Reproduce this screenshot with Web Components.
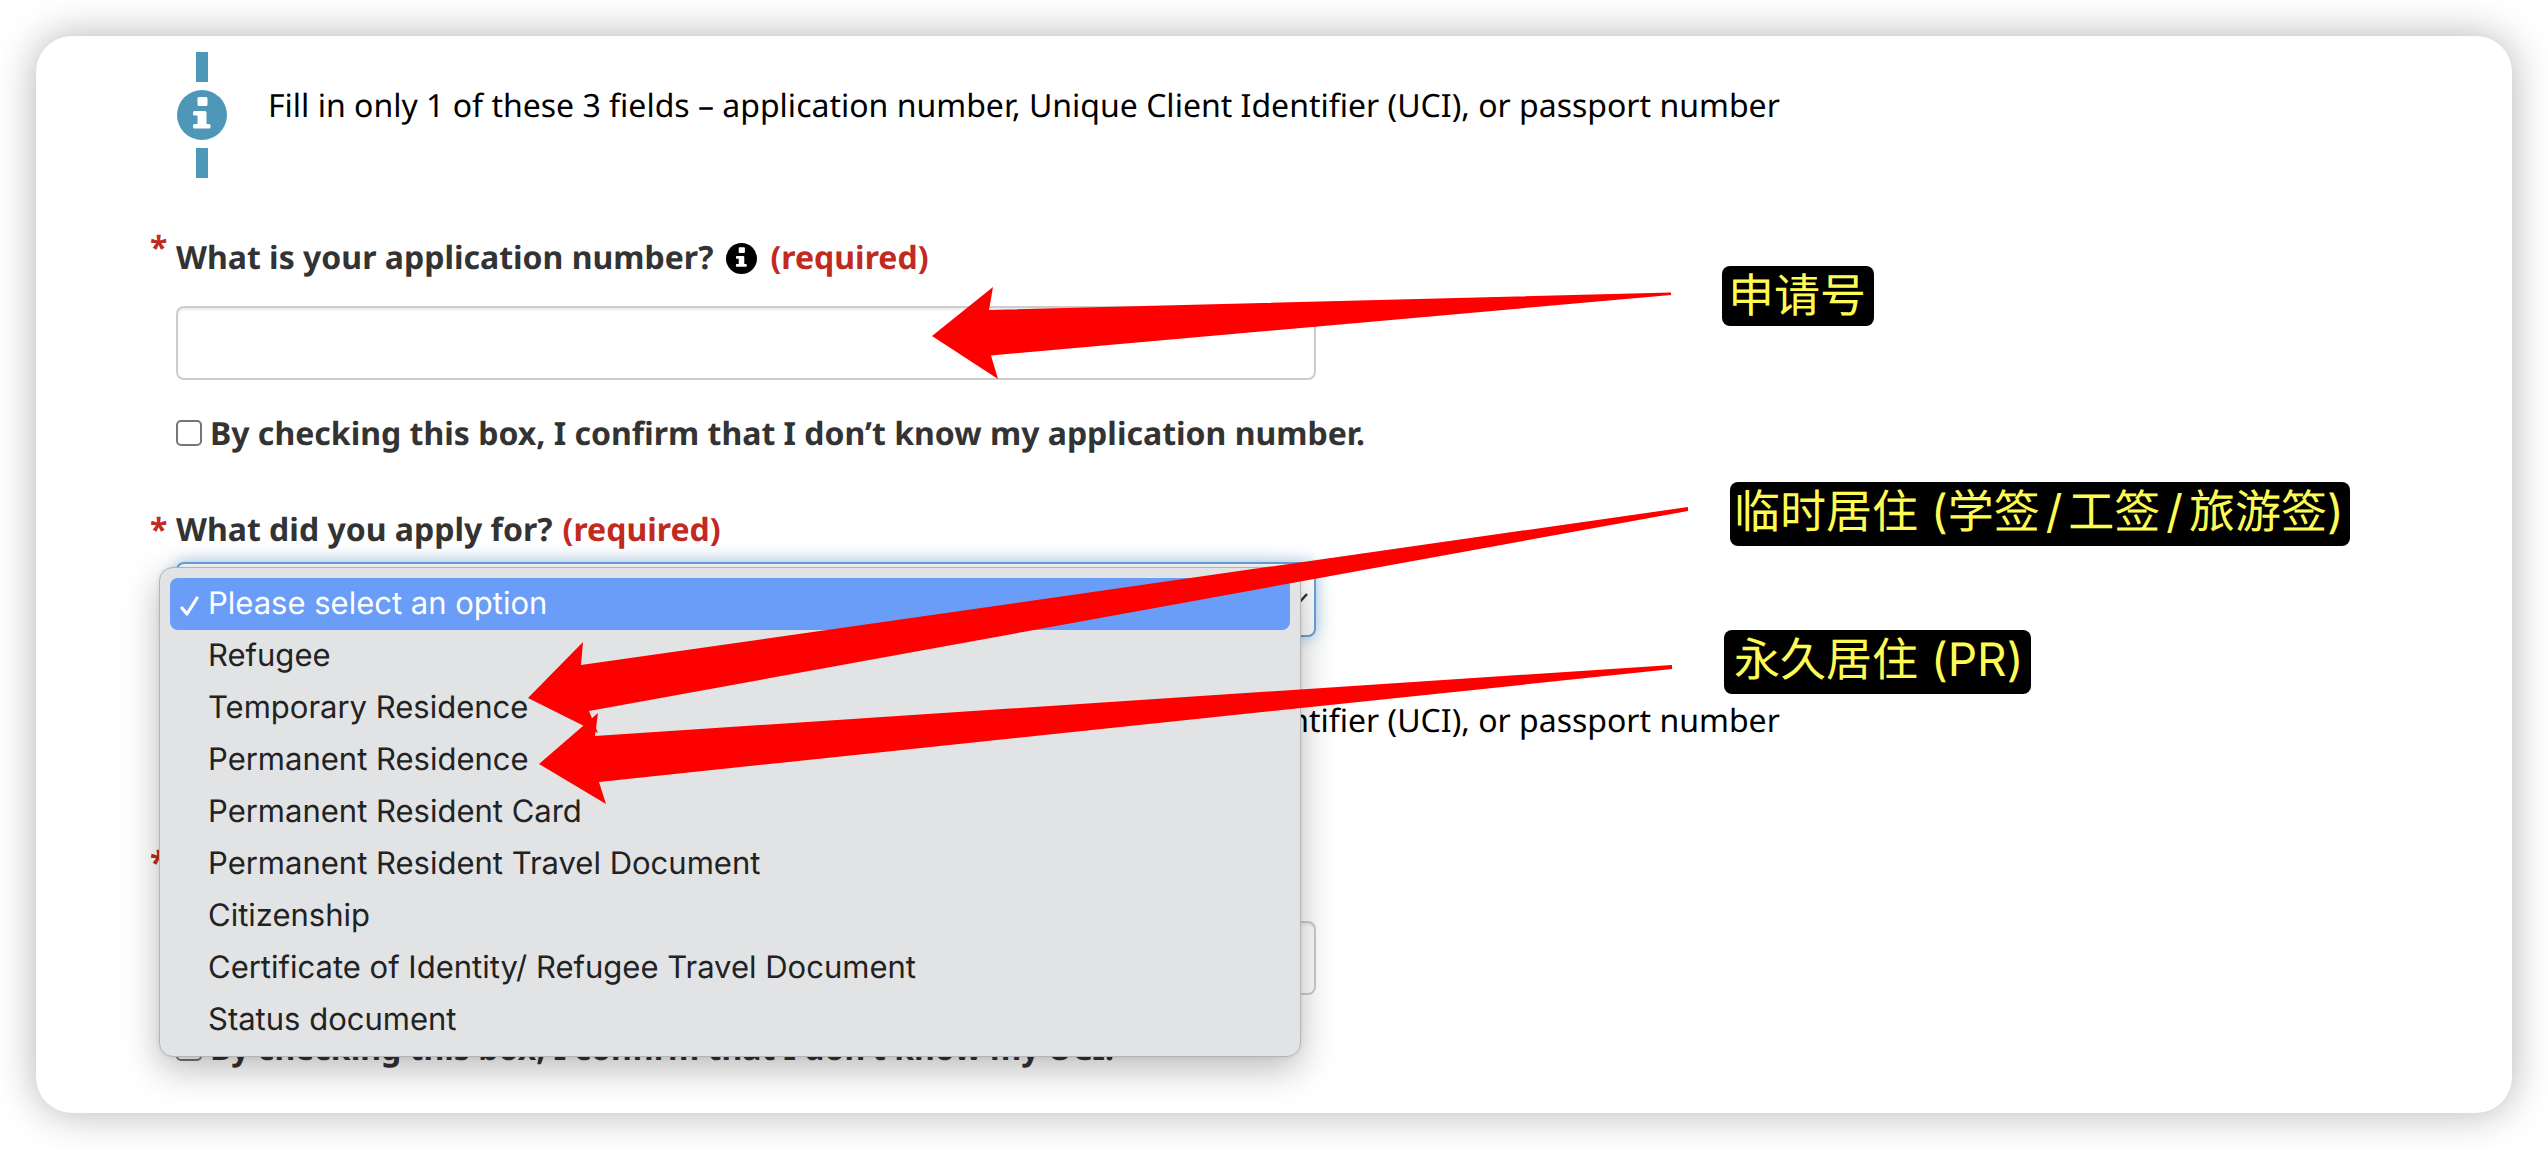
<!DOCTYPE html>
<html lang="en">
<head>
<meta charset="utf-8">
<title>Application status</title>
<style>
  body { margin: 0; background: #fff; font-family: "Noto Sans", sans-serif; font-size: 32px; line-height: 48px; color: #333; text-rendering: geometricPrecision; }
</style>
</head>
<body>
<status-page></status-page>
<script>
const define = (name, html, setup) => customElements.define(name, class extends HTMLElement {
  constructor() {
    super();
    const t = document.createElement('template');
    t.innerHTML = html;
    this.attachShadow({ mode: 'open' }).append(t.content.cloneNode(true));
  }
  connectedCallback() { if (setup) setup(this, this.shadowRoot); }
});

define('info-icon', `
  <style>:host{display:block;flex:none} svg{display:block;width:100%;height:100%}</style>
  <svg viewBox="0 0 50 50" aria-hidden="true">
    <circle cx="25" cy="25" r="25" fill="currentColor"/>
    <path fill="#fff" d="M22 7h7a1.500 1.500 0 0 1 1.500 1.500v6a1.500 1.500 0 0 1-1.500 1.500h-7a1.500 1.500 0 0 1-1.500-1.500v-6A1.500 1.500 0 0 1 22 7zM17.500 21H28a1.500 1.500 0 0 1 1.500 1.500V34h2.500a1.500 1.500 0 0 1 1.500 1.500v1.500a1.500 1.500 0 0 1-1.500 1.500H17.500a1.500 1.500 0 0 1-1.500-1.500v-1.500a1.500 1.500 0 0 1 1.500-1.500H20.500v-8.500h-3a1.500 1.500 0 0 1-1.500-1.500v-1.500A1.500 1.500 0 0 1 17.500 21z"/>
  </svg>`);

define('info-note', `
  <style>
    :host{display:flex;gap:41px;color:#000}
    .rail{display:flex;flex-direction:column;align-items:center;gap:8px;width:50px;height:126px;margin-left:1px;color:#4e97b8}
    .bar{width:12px;flex:1;background:currentColor}
    info-icon{width:50px;height:50px}
    p{margin:0;padding-top:30px}
  </style>
  <div class="rail"><span class="bar"></span><info-icon></info-icon><span class="bar"></span></div>
  <p><slot></slot></p>`);

define('field-label', `
  <style>
    :host{display:flex;gap:8px;margin-left:-26px;font-weight:700}
    .star,.req{color:#c12a1f}
    .star{width:18px}
    :host([hint]) .star{line-height:28px}
    .text{display:flex;align-items:center;gap:10px}
    info-icon{display:none;width:31px;height:31px;margin:0 3px;color:#000}
    :host([hint]) info-icon{display:block}
    :host([bare]) .text{visibility:hidden;height:48px}
  </style>
  <span class="star">*</span>
  <span class="text"><slot></slot><info-icon></info-icon><span class="req">(required)</span></span>`, (host, root) => {
    if (host.hasAttribute('bare')) root.querySelector('.req').remove();
  });

define('text-field', `
  <style>
    :host{display:block}
    label{display:block;margin-bottom:24px}
    input{display:block;box-sizing:border-box;width:100%;max-width:1140px;height:74px;padding:0 24px;border:2px solid #ccc;border-radius:8px;background:#fff;font:inherit;box-shadow:inset 0 2px 2px rgba(0,0,0,.075);outline:0}
  </style>
  <label for="f"><field-label hint><slot></slot></field-label></label>
  <input id="f" type="text">`, (host, root) => {
    if (!host.textContent) {
      const old = root.querySelector('field-label');
      const label = document.createElement('field-label');
      label.setAttribute('hint', '');
      label.setAttribute('bare', '');
      old.replaceWith(label);
      root.querySelector('input').setAttribute('aria-label', 'UCI');
    }
  });

define('confirm-box', `
  <style>
    :host{display:block;font-weight:700}
    label{display:flex;align-items:center;gap:8px}
    span{padding-top:2px}
    input{appearance:none;box-sizing:border-box;width:26px;height:26px;margin:0;border:2px solid #767676;border-radius:5px;background:#fff}
  </style>
  <label><input type="checkbox"><span><slot></slot></span></label>`);

define('option-menu', `
  <style>
    :host{display:block;box-sizing:border-box;padding:10px;border:1px solid #b4b5b7;border-radius:14px;background:#e2e3e5;box-shadow:0 12px 36px rgba(0,0,0,.27),0 0 4px rgba(0,0,0,.08);font-family:Inter,sans-serif;font-size:31px;color:#222}
    ul{list-style:none;margin:0;padding:0}
    li{display:flex;align-items:center;box-sizing:border-box;height:52px;padding-bottom:1px;border-radius:8px}
    .tick{width:38px;display:flex;justify-content:center;flex:none}
    svg{display:none;width:20px;height:20px;margin-top:4px}
    li[aria-selected=true]{background:#699df8;color:#fff}
    li[aria-selected=true] svg{display:block}
  </style>
  <ul role="listbox"></ul>`, (host, root) => {
    const ul = root.querySelector('ul');
    host.getAttribute('options').split('|').forEach((text, i) => {
      const li = document.createElement('li');
      li.setAttribute('role', 'option');
      li.setAttribute('aria-selected', String(i === 0));
      li.innerHTML = '<span class="tick"><svg viewBox="0 0 20 20" fill="none" stroke="currentColor" stroke-width="3.200" stroke-linecap="round" stroke-linejoin="round"><path d="M3 12l5 6L18 2"/></svg></span><span></span>';
      li.lastChild.textContent = text;
      ul.append(li);
    });
  });

define('select-field', `
  <style>
    :host{display:block}
    label{display:block;margin-bottom:8px}
    .box{position:relative;max-width:1140px}
    select{appearance:none;display:block;box-sizing:border-box;width:100%;height:75px;padding:0 24px;border:2px solid #66a3de;border-radius:8px;background:#fff;font:inherit;color:#333;box-shadow:0 0 16px rgba(102,163,222,.6);outline:0}
    .chev{position:absolute;right:8px;top:28px;width:22px;height:18px}
    option-menu{position:absolute;z-index:1;left:-17px;right:15px;top:5px}
  </style>
  <label for="s"><field-label><slot></slot></field-label></label>
  <div class="box">
    <select id="s"><option>Please select an option</option></select>
    <svg class="chev" viewBox="0 0 22 18" fill="none" stroke="#333" stroke-width="2.500"><path d="M1 4l10 11L21 4"/></svg>
    <option-menu options="Please select an option|Refugee|Temporary Residence|Permanent Residence|Permanent Resident Card|Permanent Resident Travel Document|Citizenship|Certificate of Identity/ Refugee Travel Document|Status document"></option-menu>
  </div>`);

define('callout-tag', `
  <style>
    :host{display:block;position:absolute;z-index:3;padding:0 6px 4px 4px;border-radius:8px;background:#000;color:#fffb55;font-family:Inter,"Noto Sans CJK SC",sans-serif;font-size:46px;line-height:60px;white-space:nowrap}
    ::slotted(i){font-style:normal;margin:0 6px}
  </style>
  <slot></slot>`);

define('callout-arrows', `
  <style>
    :host{display:block;position:absolute;z-index:2;left:0;top:0;pointer-events:none}
    svg{display:block;fill:#f00}
  </style>
  <svg width="1700" height="820" viewBox="0 0 1700 820" aria-hidden="true">
    <path d="M932 336L993 287L989 310L1671 292.500V295L991 355.500L998 379Z"/>
    <path d="M528 698L583 642L581 665L1688 507V511L589 711L598 733Z"/>
    <path d="M539 764L598 713L595 736L1672 665V669L599 782L606 804Z"/>
  </svg>`);

define('status-page', `
  <style>
    :host{display:block;position:relative;padding:36px}
    form{display:block;padding:16px 140px 40px;border-radius:36px;background:#fff;box-shadow:0 0 40px rgba(0,0,0,.3)}
    text-field{margin-top:56px}
    confirm-box{margin-top:28px}
    select-field{margin-top:48px}
    .second{margin-top:30px}
    .t1{left:1722px;top:266px;padding:0 8px 0 6px}
    .t2{left:1730px;top:482px}
    .t3{left:1724px;top:630px;padding:0 8px 4px 10px}
  </style>
  <form>
    <info-note>Fill in only 1 of these 3 fields – application number, Unique Client Identifier (UCI), or passport number</info-note>
    <text-field>What is your application number?</text-field>
    <confirm-box>By checking this box, I confirm that I don’t know my application number.</confirm-box>
    <select-field>What did you apply for?</select-field>
    <info-note class="second">Fill in only 1 of these 3 fields – application number, Unique Client Identifier (UCI), or passport number</info-note>
    <text-field></text-field>
    <confirm-box>By checking this box, I confirm that I don’t know my UCI.</confirm-box>
  </form>
  <callout-arrows></callout-arrows>
  <callout-tag class="t1" lang="zh-CN">申请号</callout-tag>
  <callout-tag class="t2" lang="zh-CN">临时居住 (学签<i>/</i>工签<i>/</i>旅游签)</callout-tag>
  <callout-tag class="t3" lang="zh-CN">永久居住 (PR)</callout-tag>`);
</script>
</body>
</html>
